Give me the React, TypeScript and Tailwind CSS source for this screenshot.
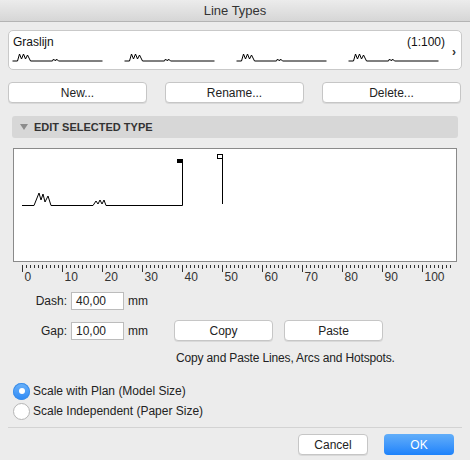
import React from 'react';

const font = { fontFamily: '"Liberation Sans", Arial, sans-serif' };

// one repeat of the grass line pattern in the type list
const GrassPattern = ({ x }: { x: number }) => (
  <polyline
    transform={`translate(${x} 0)`}
    points="0,30 5,30 7,23 9,28 11,23 13,28 15,24 18,30 40,30 41,28 43,30 44,28 46,30 90,30"
    fill="none"
    stroke="#000"
    strokeWidth="1"
  />
);

const Button = ({ label, className = '' }: { label: string; className?: string }) => (
  <button
    className={`h-[21px] rounded-[4px] border border-[#c6c6c6] bg-white text-[12px] text-[#222] shadow-[0_1px_0_rgba(0,0,0,0.08)] ${className}`}
  >
    {label}
  </button>
);

const Ruler = () => {
  const ticks = [];
  for (let i = 0; i <= 107; i++) {
    const x = 9.5 + i * 4;
    const major = i % 10 === 0;
    const mid = i % 5 === 0;
    ticks.push(
      <line key={i} x1={x} y1={3} x2={x} y2={major ? 10 : mid ? 7 : 6} stroke="#333" strokeWidth="1" />
    );
  }
  const labels = [];
  for (let n = 0; n <= 100; n += 10) {
    labels.push(
      <text key={n} x={9.5 + n * 4 + 2} y={19} fontSize="12" fill="#333" style={font}>
        {n}
      </text>
    );
  }
  return (
    <svg width="460" height="24" className="block">
      {ticks}
      {labels}
    </svg>
  );
};

const Radio = ({ checked, label }: { checked: boolean; label: string }) => (
  <div className="flex h-[20px] items-center gap-[3px]">
    {checked ? (
      <span className="flex h-[17px] w-[17px] items-center justify-center rounded-full bg-gradient-to-b from-[#6cb3fa] to-[#2a89f6] shadow-[inset_0_0_0_1px_#3d8ee8]">
        <span className="h-[6px] w-[6px] rounded-full bg-white" />
      </span>
    ) : (
      <span className="h-[17px] w-[17px] rounded-full border border-[#b5b5b5] bg-white" />
    )}
    <span className="text-[12px] text-[#222]">{label}</span>
  </div>
);

export default function App() {
  return (
    <div className="flex h-[460px] w-[470px] flex-col overflow-hidden bg-[#ececec]" style={font}>
      {/* barra de titulo */}
      <div className="flex h-[22px] items-center justify-center border-b border-[#b4b4b4] bg-gradient-to-b from-[#ececec] to-[#d6d6d6] text-[13px] text-[#333]">
        Line Types
      </div>

      {/* tipo de linea seleccionado */}
      <div className="relative mx-[8px] mt-[8px] h-[40px] rounded-[5px] border border-[#c9c9c9] bg-white">
        <div className="flex justify-between px-[4px] pt-[4px] text-[12px] leading-[14px] text-[#111]">
          <span>Graslijn</span>
          <span className="mr-[12px]">(1:100)</span>
        </div>
        <svg width="440" height="36" className="absolute left-[3px] top-0">
          <GrassPattern x={0.5} />
          <GrassPattern x={112.5} />
          <GrassPattern x={224.5} />
          <GrassPattern x={336.5} />
        </svg>
        <span className="absolute right-[5px] top-[12px] text-[12px] font-bold text-[#333]">›</span>
      </div>

      <div className="mx-[8px] mt-[12px] flex gap-[18px]">
        <Button label="New..." className="w-[139px]" />
        <Button label="Rename..." className="w-[139px]" />
        <Button label="Delete..." className="w-[139px]" />
      </div>

      {/* seccion */}
      <div className="mx-[12px] mt-[13px] flex h-[22px] items-center gap-[6px] rounded-[3px] bg-[#d7d7d7] pl-[8px]">
        <svg width="8" height="6" viewBox="0 0 8 6">
          <polygon points="0,0 8,0 4,6" fill="#8c8c8c" />
        </svg>
        <span className="text-[11px] font-bold text-[#333]">EDIT SELECTED TYPE</span>
      </div>

      {/* vista previa */}
      <div className="ml-[13px] mt-[10px] h-[114px] w-[444px] border border-[#8a8a8a] bg-white">
        <svg width="442" height="112" className="block">
          <polyline
            points="8,56.5 20,56.5 25,44 27,51 29,45 31,53 34,47 37,56.5 79,56.5 82,52 84,55 86,51 88,55 90,51 92,56.5 168.5,56.5 168.5,11"
            fill="none"
            stroke="#000"
            strokeWidth="1"
          />
          <rect x="163" y="10" width="6" height="4" fill="#000" />
          <line x1="208.5" y1="6" x2="208.5" y2="55" stroke="#000" strokeWidth="1" />
          <rect x="203.5" y="5.5" width="5" height="4" fill="#fff" stroke="#000" strokeWidth="1" />
        </svg>
      </div>

      <div className="ml-[13px]">
        <Ruler />
      </div>

      {/* medidas */}
      <div className="mt-[6px] flex items-center">
        <span className="w-[67px] text-right text-[12px] text-[#222]">Dash:</span>
        <div className="ml-[4px] flex h-[18px] w-[53px] items-center border border-[#bcbcbc] bg-white pl-[4px] text-[12px] text-[#222]">
          40,00
        </div>
        <span className="ml-[4px] text-[12px] text-[#222]">mm</span>
      </div>
      <div className="mt-[10px] flex items-center">
        <span className="w-[67px] text-right text-[12px] text-[#222]">Gap:</span>
        <div className="ml-[4px] flex h-[18px] w-[53px] items-center border border-[#bcbcbc] bg-white pl-[4px] text-[12px] text-[#222]">
          10,00
        </div>
        <span className="ml-[4px] text-[12px] text-[#222]">mm</span>
        <Button label="Copy" className="ml-[26px] w-[99px]" />
        <Button label="Paste" className="ml-[11px] w-[99px]" />
      </div>
      <div className="ml-[176px] mt-[8px] text-[12px] tracking-[-0.15px] text-[#222]">
        Copy and Paste Lines, Arcs and Hotspots.
      </div>

      <div className="ml-[13px] mt-[14px] flex flex-col">
        <Radio checked label="Scale with Plan (Model Size)" />
        <Radio checked={false} label="Scale Independent (Paper Size)" />
      </div>

      <div className="mx-[8px] mt-[6px] border-t border-[#d3d3d3]" />

      <div className="mr-[16px] mt-[6px] flex justify-end gap-[16px]">
        <Button label="Cancel" className="w-[70px]" />
        <button className="h-[21px] w-[70px] rounded-[4px] bg-gradient-to-b from-[#62aef9] to-[#1b82fb] text-[12px] text-white">
          OK
        </button>
      </div>
    </div>
  );
}
